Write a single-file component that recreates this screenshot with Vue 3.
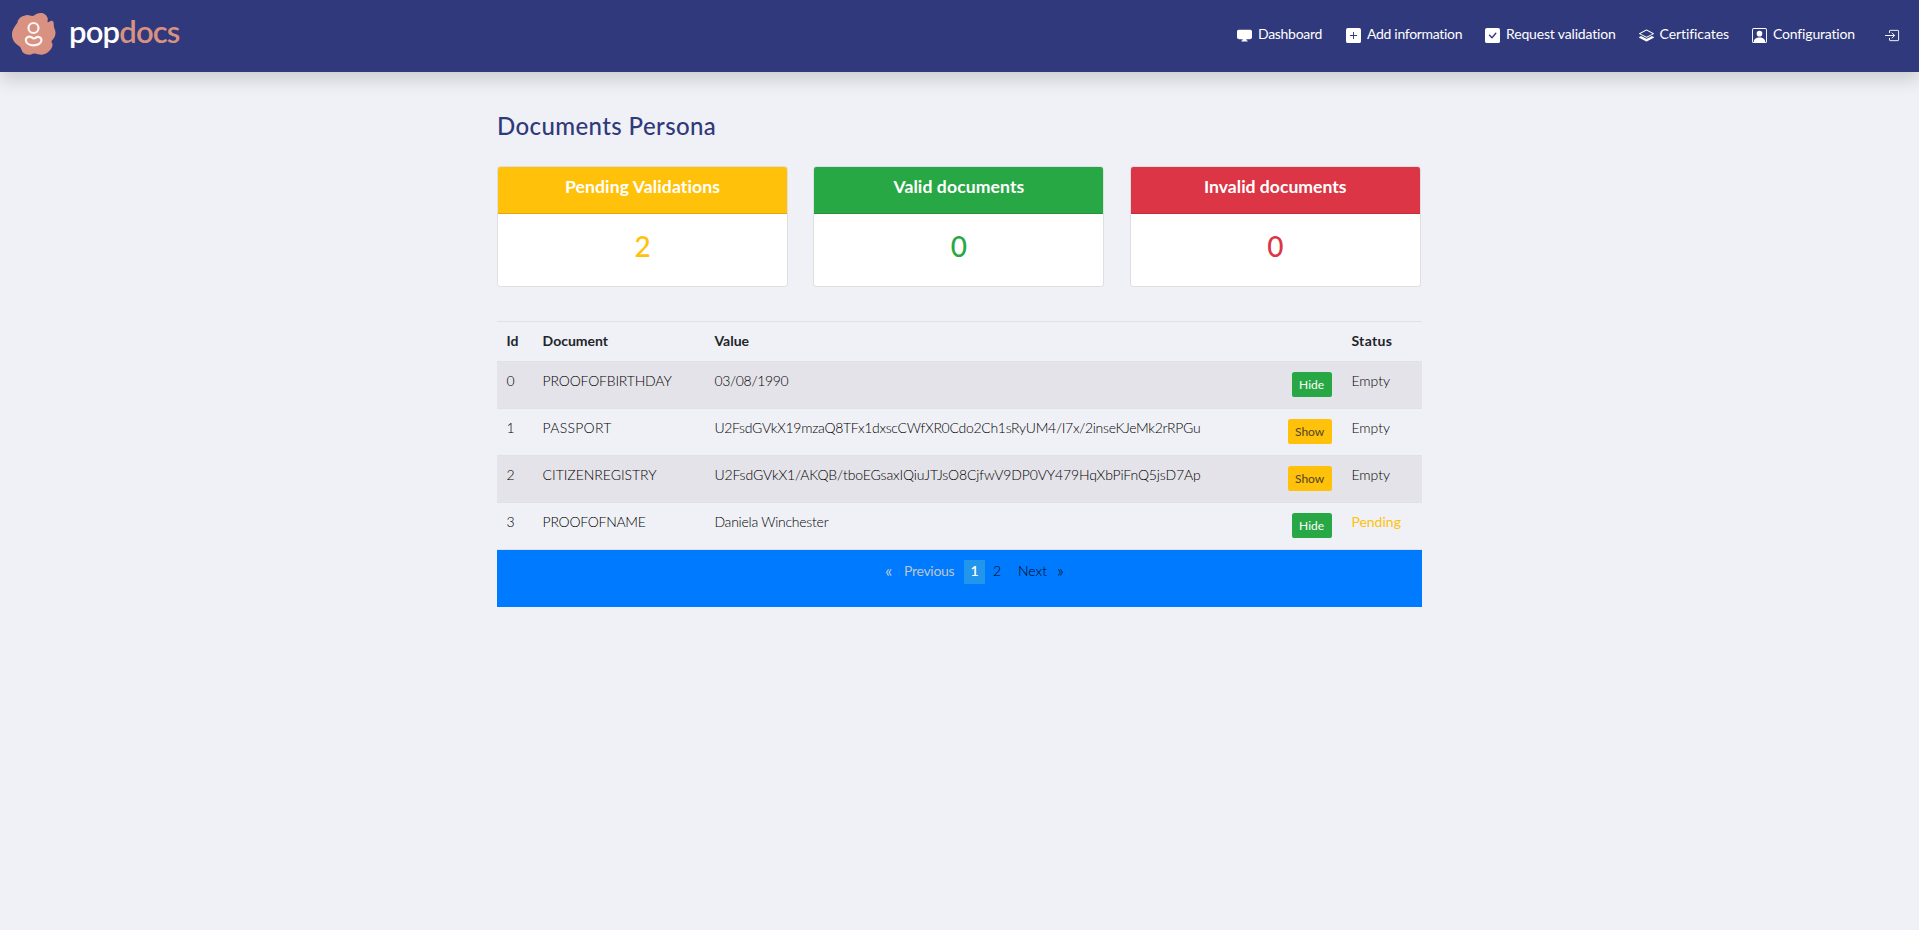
<script setup>
const links = [
  { label: 'Dashboard', icon: 'display', track: -0.3 },
  { label: 'Add information', icon: 'plus', track: -0.31 },
  { label: 'Request validation', icon: 'check', track: -0.16 },
  { label: 'Certificates', icon: 'layers', track: -0.07 },
  { label: 'Configuration', icon: 'person', track: -0.17 },
]

const cards = [
  { title: 'Pending Validations', count: 2, tone: 'warning', track: 0.1 },
  { title: 'Valid documents', count: 0, tone: 'success', track: 0.09 },
  { title: 'Invalid documents', count: 0, tone: 'danger', track: 0 },
]

const rows = [
  { id: 0, name: 'PROOFOFBIRTHDAY', nameTrack: -0.19, value: '03/08/1990', track: -0.31, open: true, status: 'Empty' },
  { id: 1, name: 'PASSPORT', nameTrack: 0.26, value: 'U2FsdGVkX19mzaQ8TFx1dxscCWfXR0Cdo2Ch1sRyUM4/I7x/2inseKJeMk2rRPGu', track: -0.29, open: false, status: 'Empty' },
  { id: 2, name: 'CITIZENREGISTRY', nameTrack: -0.03, value: 'U2FsdGVkX1/AKQB/tboEGsaxIQiuJTJsO8CjfwV9DP0VY479HqXbPiFnQ5jsD7Ap', track: -0.12, open: false, status: 'Empty' },
  { id: 3, name: 'PROOFOFNAME', nameTrack: -0.28, value: 'Daniela Winchester', track: -0.24, open: true, status: 'Pending' },
]

const spacing = (n) => ({ letterSpacing: n + 'px' })
</script>

<template>
  <div class="page">
    <header class="navbar">
      <a class="brand">
        <svg class="mark" width="44" height="42" viewBox="0 0 44 42">
          <path fill="#d99282" d="M5.500 9.500C5.500 6.500 9 3 14 2.200C17 1.500 19.500 3.800 22 2.500C24 1 25.500 0 29 0C32.500 0 35 2.500 35.800 5.500C36 7.500 34.800 9 36 9.200C38.500 8 40 7 41.300 8.500C42.200 11 41.300 14 43 17C44.300 21 43 24.500 40 27.500C38.500 29 41 30 40.500 32.500C39.500 37 35 41 30 41.800C26 42 24 39.800 21 40.800C18 42.500 13 42 10.500 39C9 36.500 9.500 34.500 7 33C2 30 0 26 0 21.500C0 16.500 3 13.500 5.500 9.500Z" />
          <g fill="none" stroke="#fff6f4" stroke-width="2.200">
            <circle cx="21.500" cy="15" r="5" />
            <path d="M19 24C22 26 22 26 25 24C27.500 23.300 29.500 25 29.500 27.200C29.200 30.500 25.500 32.300 21.600 32.300C17.500 32.300 13.900 30.300 13.800 27C13.800 24.700 16.500 23 19 24Z" />
          </g>
        </svg>
        <span class="wordmark"><b>pop</b><i>docs</i></span>
      </a>
      <nav class="links">
        <a v-for="l in links" :key="l.label" class="link" :class="l.icon">
          <svg width="15" height="15" viewBox="0 0 16 16" fill="#fff">
            <path v-if="l.icon === 'display'" d="M6 13c0 .667-.083 1.167-.25 1.500H5a.5.5 0 0 0 0 1h6a.5.5 0 0 0 0-1h-.75c-.167-.333-.25-.833-.25-1.500h4c2 0 2-2 2-2V5c0-2-2-2-2-2H2C0 3 0 5 0 5v6c0 2 2 2 2 2h4z" />
            <path v-else-if="l.icon === 'plus'" d="M2 0a2 2 0 0 0-2 2v12a2 2 0 0 0 2 2h12a2 2 0 0 0 2-2V2a2 2 0 0 0-2-2H2zm6.500 4.500v3h3a.5.5 0 0 1 0 1h-3v3a.5.5 0 0 1-1 0v-3h-3a.5.5 0 0 1 0-1h3v-3a.5.5 0 0 1 1 0z" />
            <path v-else-if="l.icon === 'check'" d="M2 0a2 2 0 0 0-2 2v12a2 2 0 0 0 2 2h12a2 2 0 0 0 2-2V2a2 2 0 0 0-2-2H2zm10.030 4.970a.75.75 0 0 1 .011 1.050l-3.992 4.990a.75.75 0 0 1-1.080.020L4.324 8.384a.75.75 0 1 1 1.060-1.060l2.094 2.093 3.473-4.425a.75.75 0 0 1 1.080-.022z" />
            <template v-else-if="l.icon === 'layers'">
              <path d="M7.765 1.560a.5.5 0 0 1 .47 0l7.500 4a.5.5 0 0 1 0 .88l-7.500 4a.5.5 0 0 1-.47 0l-7.500-4a.5.5 0 0 1 0-.88l7.500-4zM8 2.570 1.560 6 8 9.430 14.440 6 8 2.570z" />
              <path d="m2.130 8.570-1.860.99a.5.5 0 0 0 0 .88l7.500 4a.5.5 0 0 0 .46 0l7.500-4a.5.5 0 0 0 0-.88l-1.860-.99-5.170 2.760a1.500 1.500 0 0 1-1.400 0z" />
            </template>
            <template v-else>
              <path d="M11 6a3 3 0 1 1-6 0 3 3 0 0 1 6 0z" />
              <path d="M2 0a2 2 0 0 0-2 2v12a2 2 0 0 0 2 2h12a2 2 0 0 0 2-2V2a2 2 0 0 0-2-2H2zm12 1a1 1 0 0 1 1 1v12a1 1 0 0 1-1 1v-1c0-1-1-4-6-4s-6 3-6 4v1a1 1 0 0 1-1-1V2a1 1 0 0 1 1-1h12z" />
            </template>
          </svg>
          <span :style="spacing(l.track)">{{ l.label }}</span>
        </a>
        <a class="exit">
          <svg width="15" height="15" viewBox="0 0 16 16" fill="none" stroke="#fff" stroke-linecap="round" stroke-linejoin="round">
            <path d="M4.800 5V3.200a.7.7 0 0 1 .7-.7h8.300a.7.7 0 0 1 .7.7v9.600a.7.7 0 0 1-.7.7H5.500a.7.7 0 0 1-.7-.7V11M.5 8h9.500M7.500 5.300 10.200 8l-2.700 2.700" />
          </svg>
        </a>
      </nav>
    </header>

    <main class="container">
      <h1>Documents Persona</h1>

      <section class="cards">
        <article v-for="c in cards" :key="c.title" class="card" :class="c.tone">
          <div class="card-head" :style="spacing(c.track)">{{ c.title }}</div>
          <div class="card-count">{{ c.count }}</div>
        </article>
      </section>

      <table>
        <colgroup>
          <col class="c-id" /><col class="c-doc" /><col class="c-val" /><col class="c-act" /><col class="c-status" />
        </colgroup>
        <thead>
          <tr><th>Id</th><th>Document</th><th>Value</th><th></th><th class="th-status">Status</th></tr>
        </thead>
        <tbody>
          <tr v-for="r in rows" :key="r.id">
            <td>{{ r.id }}</td>
            <td :style="spacing(r.nameTrack)">{{ r.name }}</td>
            <td :style="spacing(r.track)">{{ r.value }}</td>
            <td class="action"><button :class="r.open ? 'hide' : 'show'">{{ r.open ? 'Hide' : 'Show' }}</button></td>
            <td class="status" :class="{ pending: r.status === 'Pending' }">{{ r.status }}</td>
          </tr>
        </tbody>
      </table>

      <footer class="pager">
        <a class="muted arrow">«</a>
        <a class="muted prev">Previous</a>
        <a class="current">1</a>
        <a class="num">2</a>
        <a class="next">Next</a>
        <a class="arrow">»</a>
      </footer>
    </main>
  </div>
</template>

<style>
body { background: #f0f1f6; }
</style>

<style scoped>
* { box-sizing: border-box; }
.page {
  min-height: 930px;
  background: #f0f1f6;
  color: #000;
  font: 300 14px/21px Lato, "Liberation Sans", sans-serif;
}
.navbar {
  display: flex;
  justify-content: space-between;
  height: 72px;
  padding: 0 19px 0 12px;
  background: #30397b;
  box-shadow: 0 8px 16px rgba(0, 0, 0, .15);
}
.brand { display: flex; padding-top: 13px; }
.mark { flex: none; }
.wordmark {
  margin: -2px 0 0 13px;
  font-size: 31px;
  line-height: 40px;
}
.wordmark b { color: #fff; font-weight: 600; letter-spacing: -.8px; }
.wordmark i { color: #d99282; font-style: normal; font-weight: 600; letter-spacing: -.9px; }
.links { display: flex; height: 42px; padding-top: 23px; color: #fff; font-weight: 400; }
.link { display: flex; white-space: nowrap; }
.link svg { flex: none; margin: 5px 6px 0 0; }
.link.display { width: 109px; }
.link.display svg { margin-top: 4px; }
.link.plus { width: 139px; }
.link.check { width: 153.500px; }
.link.layers { width: 113.500px; }
.link.person { width: 133px; }
.exit svg { display: block; margin-top: 5px; }

.container { width: 925px; margin: 0 auto; }
h1 {
  margin: 0;
  padding: 39px 0 0;
  color: #30397b;
  font-size: 24px;
  font-weight: 500;
  line-height: 30px;
  letter-spacing: .4px;
}
.cards { display: grid; grid-template-columns: repeat(3, 291px); gap: 25.400px; margin-top: 25px; }
.card {
  height: 121px;
  overflow: hidden;
  background: #fff;
  border: 1px solid #dfdfe1;
  border-radius: 3.200px;
  text-align: center;
}
.card-head {
  height: 47px;
  padding-top: 9px;
  border-bottom: 1px solid rgba(0, 0, 0, .125);
  color: #fff;
  font-size: 17.600px;
  font-weight: 700;
  line-height: 22px;
}
.card-count { padding-top: 15px; font-size: 28px; font-weight: 500; line-height: 34px; }
.warning .card-head { background: #ffc10a; }
.success .card-head { background: #28a745; }
.danger .card-head { background: #dc3545; }
.warning .card-count { color: #ffc10a; }
.success .card-count { color: #28a745; }
.danger .card-count { color: #dc3545; }

table { width: 925px; margin-top: 34px; table-layout: fixed; border-spacing: 0; }
.c-id { width: 36px; }
.c-doc { width: 171.800px; }
.c-val { width: 564.400px; }
.c-act { width: 72px; }
th, td { padding: 8px 9.600px 0; border-top: 1px solid #dee2e6; text-align: left; vertical-align: top; white-space: nowrap; }
th { height: 40px; font-weight: 700; color: #212529; }
.th-status { padding-left: 10.200px; letter-spacing: .36px; }
td { height: 47px; }
.status { padding-left: 10.200px; }
tbody tr:nth-child(odd) { background: #e4e3e9; }
.action { padding-top: 10px; text-align: right; }
.pending { color: #ffc10a; font-weight: 400; }
button {
  display: inline-block;
  height: 25px;
  padding: 0;
  border: 0;
  border-radius: 2.600px;
  font: 400 12px/23px Lato, "Liberation Sans", sans-serif;
  vertical-align: top;
}
.hide { width: 40px; background: #28a745; color: #fff; }
.show { width: 44px; background: #ffc10a; color: #4c4329; }
.pager {
  display: flex;
  height: 58px;
  padding: 10px 0 0 388px;
  border-top: 1px solid #dee2e6;
  background: #007bff;
  line-height: 22px;
}
.pager a { height: 24px; }
.muted { color: #bcc5d2; font-weight: 400; }
.pager .prev { width: 60px; margin-left: 11px; letter-spacing: -.3px; }
.current { width: 21px; background: #2196ea; color: #fff; font-weight: 600; text-align: center; }
.num { width: 33px; padding-left: 8px; }
.next { width: 39px; }
.arrow { width: 8px; font-size: 17px; }
</style>
